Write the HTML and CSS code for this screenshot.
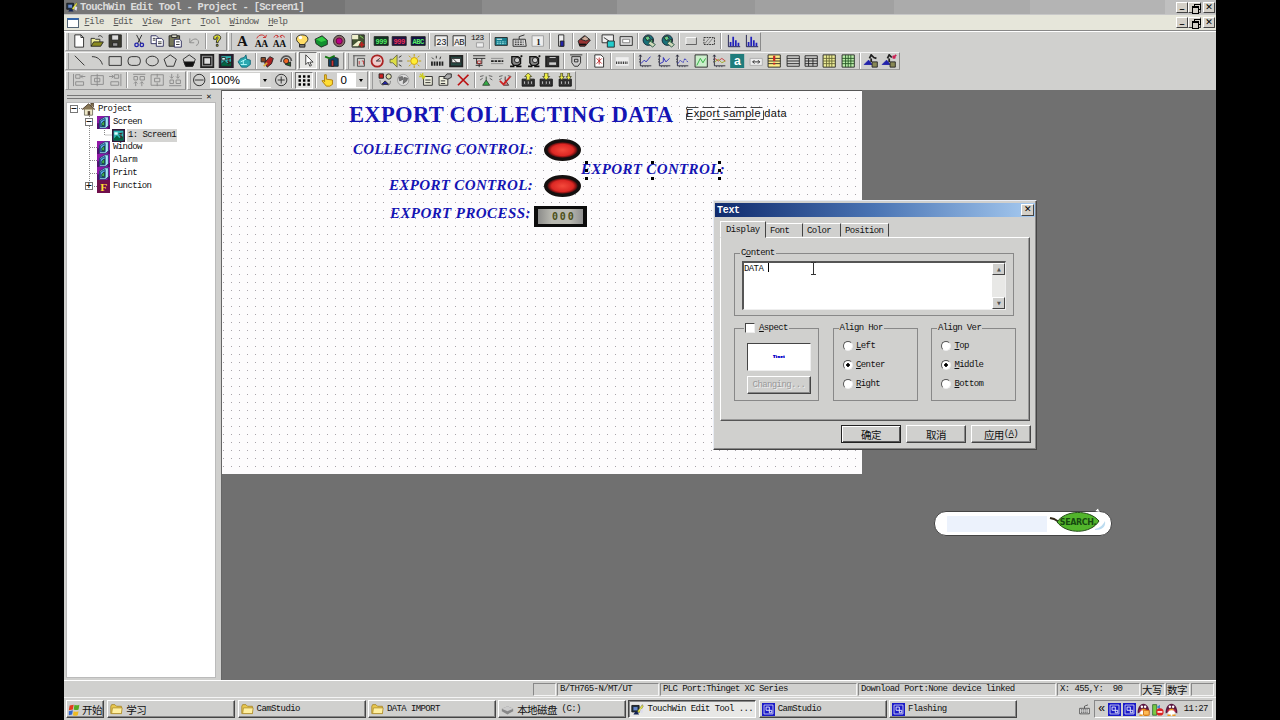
FILE: index.html
```
<!DOCTYPE html>
<html lang="en">
<head>
  <meta charset="UTF-8">
  <title>TouchWin Edit Tool - Project - [Screen1]</title>
  <link rel="stylesheet" href="styles.css">
</head>
<body>
<svg class="defs">
  <symbol id="book" viewBox="0 0 16 16"><rect width="16" height="16" fill="#9018a8"/><path d="M0 9h3v7H0zM13 11h3v5h-3z" fill="#501070"/><path d="M3 5l7-4h4v11l-3 3H3z" fill="#a8e8f4" stroke="#1a2a68" /><path d="M4 6l6-3v10H4z" fill="#58a8e0" stroke="#036"/><path d="M6 9l3-3v6H6z" fill="#4c5" stroke="#122"/></symbol>
  <symbol id="scene" viewBox="0 0 16 16"><rect width="16" height="16" fill="#301838"/><rect x="2" y="2" width="12" height="12" fill="#2cb4b4"/><path d="M2 14v-2l4-4 3 3 5-2v5z" fill="#064"/><path d="M3 4h4v3H3z" fill="#dff"/><path d="M11 5v7M8 6l5-1M9 8l4 2" stroke="#411"/></symbol>
  <symbol id="folder" viewBox="0 0 16 16"><path d="M1 13V4l1-2h4l2 2h6v9z" fill="#e8c850" stroke="#a58220"/><path d="M2 13l1-7h12l-1 7z" fill="#fff0a0" stroke="#b09030"/></symbol>
  <symbol id="app" viewBox="0 0 16 16"><path d="M1 3h9v8H1z" fill="#234" stroke="#111"/><path d="M3 5h5v4H3z" fill="#68c"/><path d="M3 14h7l-2-3H5z" fill="#125" /><path d="M8 10l6-8 1 2-5 8z" fill="#ee4" stroke="#553" stroke-width=".6"/><path d="M12 7l3 1-1 5-3-2" fill="#dde"/></symbol>
  <symbol id="cam" viewBox="0 0 16 16"><rect width="16" height="16" fill="#1a1ac8"/><path d="M2.500 2.500h11v11h-11z" stroke="#dde" fill="none"/><path d="M5 5h4v4H5zM9 9h3v3H9z" stroke="#fff" fill="none"/></symbol>
  <symbol id="penguin" viewBox="0 0 16 16"><path d="M1 13C0 8 3 1 8 1s8 7 7 12l-3-2H4z" fill="#5a1840"/><path d="M3 8h10v3H3z" fill="#d03048"/><ellipse cx="8" cy="12" rx="4" ry="3.500" fill="#fff"/><circle cx="6" cy="4.500" r="1.500" fill="#fff"/><circle cx="10" cy="4.500" r="1.500" fill="#fff"/><path d="M5 7h6l-1 2H6z" fill="#e92"/><path d="M3 15h4M9 15h4" stroke="#e92" stroke-width="2"/></symbol>
  <symbol id="globe" viewBox="0 0 16 16"><circle cx="7" cy="7" r="6" fill="#187078" stroke="#123"/><path d="M3 4l4-2 2 3-3 3zM8 8l4-2v4l-3 2z" fill="#6c8"/><path d="M9 8l6 4-3 3-5-4z" fill="#cfd8b8" stroke="#254"/></symbol>
  <symbol id="axes" viewBox="0 0 16 16"><path d="M2.500 1v12.500H15M1 3l1.500-2L4 3M5 14v1M8 14v1M11 14v1M1 6h1M1 9h1" stroke="#223" fill="none"/></symbol>
  <symbol id="bars" viewBox="0 0 16 16"><path d="M2.500 1v13.500H16" stroke="#114" fill="none"/><path d="M5 14V9M8 14V3M11 14V7M14 14v-4" stroke="#22b" stroke-width="2"/></symbol>
  <symbol id="robot" viewBox="0 0 16 16"><path d="M3 3h7l3 2v6l-3 2H5l-2-3z" fill="#888" stroke="#111" stroke-width="1.500"/><circle cx="9" cy="7" r="3" fill="#ccc" stroke="#111"/><path d="M1 14h5M8 14h6M13 2l2 1" stroke="#111" stroke-width="2"/></symbol>
  <symbol id="download" viewBox="0 0 16 16"><path d="M1 7h14v8H1z" fill="#333" stroke="#111"/><path d="M3 9h2v4H3zM7 9h2v4H7zM11 9h2v4h-2z" fill="#eee"/></symbol>
</svg>

<div class="app">
  <div class="titlebar">
    <svg class="logo"><use href="#app"/></svg>
    <span class="caption">TouchWin Edit Tool - Project - [Screen1]</span>
    <div class="winbtns"><i>_</i><i class="restore"></i><i>✕</i></div>
  </div>
  <div class="menubar">
    <span class="docicon"></span>
    <span><u>F</u>ile</span><span><u>E</u>dit</span><span><u>V</u>iew</span><span><u>P</u>art</span><span><u>T</u>ool</span><span><u>W</u>indow</span><span><u>H</u>elp</span>
    <div class="winbtns"><i>_</i><i class="restore"></i><i>✕</i></div>
  </div>

  <div class="toolbars">
    <div class="row">
      <div class="bar">
        <svg viewBox="0 0 16 16"><path d="M3 1h7l3 3v11H3z" fill="#fff"/><path d="M10 1v3h3"/></svg>
        <svg viewBox="0 0 16 16"><path d="M1 14V5h4l1 1h5v3" fill="#ee9"/><path d="M1 14l3-5h11l-3 5z" fill="#8a8a20"/><path d="M9 3c2-2 4-1 5 1"/></svg>
        <svg viewBox="0 0 16 16"><path d="M1 1h14v14H1z" fill="#3a3a30"/><path d="M4 1h8v6H4z" fill="#ddd"/><path d="M5 10h6v4H5z" fill="#999"/></svg>
        <b></b>
        <svg viewBox="0 0 16 16"><path d="M5 1l5 10M11 1L6 11"/><g stroke="#22a" stroke-width="1.500"><circle cx="5" cy="12.500" r="2"/><circle cx="11" cy="12.500" r="2"/></g></svg>
        <svg viewBox="0 0 16 16"><g fill="#fff" stroke="#225"><path d="M1 2h6l2 2v7H1z"/><path d="M7 5h6l2 2v7H7z"/></g><path d="M3 5h3M3 7h3M9 9h4M9 11h4"/></svg>
        <svg viewBox="0 0 16 16"><path d="M1 2h12v12H1z" fill="#77775a"/><path d="M4 1h6v3H4z" fill="#ddc"/><path d="M7 6h6l2 2v7H7z" fill="#fff" stroke="#225"/><path d="M9 9h4M9 12h4"/></svg>
        <svg viewBox="0 0 16 16"><path d="M3 5v5h5M3 10c3-5 9-6 10-1 0 2-1 4-3 4" stroke="#888"/></svg>
        <b></b>
        <svg viewBox="0 0 16 16"><path d="M4 6V4c0-4 8-4 8 0 0 3-3 3-3 6H7c0-4 2-4 2-6-1-1-2-1-2 2z" fill="#dd3"/><path d="M7 12h2v2H7z" fill="#dd3"/></svg>
      </div>
      <div class="bar">
        <svg viewBox="0 0 16 16"><text x="8" y="14" class="serif" font-size="17">A</text></svg>
        <svg viewBox="0 0 16 16"><text x="8" y="15" class="serif" font-size="11">AA</text><path d="M3 5c2-5 8-5 10-1l1-3M13 4h-3" stroke="#c22"/></svg>
        <svg viewBox="0 0 16 16"><text x="8" y="15" class="serif" font-size="11">AA</text><path d="M2 4c1-3 3-3 5-1M14 4c-1-3-3-3-5-1M5 1l2 2-2 1M11 1L9 3l2 1" stroke="#c22"/></svg>
        <b></b>
        <svg viewBox="0 0 16 16"><path d="M5 11C-1 7 1 1 8 1s9 6 3 10v3H5z" fill="#fd6"/><path d="M5 12h6v3H5z" fill="#777"/><circle cx="6" cy="4" r="2" fill="#fff" stroke="none"/></svg>
        <svg viewBox="0 0 16 16"><path d="M1 6l8-4 6 5v5l-7 3-6-4z" fill="#129030"/><path d="M2 6l7-3 5 4-6 2z" fill="#3c4" stroke="none"/></svg>
        <svg viewBox="0 0 16 16"><circle cx="8" cy="8" r="6.500" fill="#866"/><circle cx="8" cy="8" r="3.500" fill="#b08" stroke="#603"/></svg>
        <svg viewBox="0 0 16 16"><path d="M1 1h14v14H1z" fill="#453" /><path d="M1 1h7v5H1zM8 8h3l-3 6H1z" fill="#eec" stroke="none"/><path d="M12 9v6M9 12h6" stroke="#b22" stroke-width="2"/><path d="M10 2l4 3" stroke="#8d6"/></svg>
        <b></b>
        <svg viewBox="0 0 16 16"><path d="M0 3h16v10H0z" fill="#132"/><text x="8" y="11" font-size="8" class="led">999</text></svg>
        <svg viewBox="0 0 16 16"><path d="M0 3h16v10H0z" fill="#214"/><text x="8" y="11" font-size="8" class="led red">999</text></svg>
        <svg viewBox="0 0 16 16"><path d="M0 3h16v10H0z" fill="#114"/><text x="8" y="11" font-size="8" class="led">ABC</text></svg>
        <b></b>
        <svg viewBox="0 0 16 16"><path d="M1 14V2h14v12" fill="#eee"/><text x="8" y="12" font-size="10">23</text></svg>
        <svg viewBox="0 0 16 16"><path d="M1 14V2h14v12" fill="#eee"/><text x="8" y="12" font-size="10">AB</text></svg>
        <svg viewBox="0 0 16 16"><text x="7" y="7" font-size="9">123</text><path d="M6 10h8v5H6z" fill="#eee" stroke="#999"/></svg>
        <b></b>
        <svg viewBox="0 0 16 16"><path d="M1 4h14v9H1z" fill="#188090"/><path d="M3 6h6" stroke="#fff"/><path d="M3 9h10M3 11h10" stroke="#aee" stroke-dasharray="2 1"/></svg>
        <svg viewBox="0 0 16 16"><path d="M1 6h14l1 8H1zM8 6V3l6-2" fill="#ddd"/><path d="M3 8h10M3 10h10M3 12h10" stroke-dasharray="2 1"/></svg>
        <svg viewBox="0 0 16 16"><path d="M1 2h13v12H1z" fill="#eee" stroke="#999"/><text x="8" y="12" font-size="10" class="serif">1</text></svg>
        <b></b>
        <svg viewBox="0 0 16 16"><path d="M5 1h6v13H5z" fill="#eee"/><path d="M7 8h4v6H7z" fill="#22a"/></svg>
        <b></b>
        <svg viewBox="0 0 16 16"><path d="M1 8l7-6 7 5-6 7H3z" fill="#933"/><path d="M4 6l5-4 5 4-4 2z" fill="#ca9"/><path d="M2 12h8" stroke="#111" stroke-width="2"/></svg>
        <b></b>
        <svg viewBox="0 0 16 16"><path d="M1 1h13v9H1z" fill="#eee"/><path d="M7 8h8v7H7z" fill="#2cc"/><path d="M3 4l6 4"/></svg>
        <svg viewBox="0 0 16 16"><path d="M1 3h14v10H1z" fill="#ddd"/><path d="M4 6h8v4H4z" fill="#fff" stroke="#777"/></svg>
        <b></b>
        <svg><use href="#globe"/></svg>
        <svg><use href="#globe"/></svg>
        <b></b>
        <svg viewBox="0 0 16 16"><path d="M2 12V4h12" stroke="#fff"/><path d="M2 12h12V4" stroke="#555"/></svg>
        <svg viewBox="0 0 16 16"><path d="M2 4h12v8H2z" stroke-dasharray="2 1"/><path d="M3 11l5-6M7 11l5-6" stroke="#777"/></svg>
        <b></b>
        <svg><use href="#bars"/></svg>
        <svg><use href="#bars"/></svg>
      </div>
    </div>
    <div class="row">
      <div class="bar">
        <svg viewBox="0 0 16 16"><path d="M3 2l11 11"/></svg>
        <svg viewBox="0 0 16 16"><path d="M2 3c6 0 10 3 12 9"/></svg>
        <svg viewBox="0 0 16 16"><path d="M1 3h14v10H1z"/></svg>
        <svg viewBox="0 0 16 16"><rect x="1" y="3" width="14" height="10" rx="4"/></svg>
        <svg viewBox="0 0 16 16"><ellipse cx="8" cy="8" rx="7" ry="5.500"/></svg>
        <svg viewBox="0 0 16 16"><path d="M8 1l7 5-3 8H4L1 6z"/></svg>
        <svg viewBox="0 0 16 16"><path d="M8 1l7 5-3 8H4L1 6z"/><path d="M2 9h12l-2 5H4z" fill="#111"/></svg>
        <svg viewBox="0 0 16 16"><path d="M1 1h14v14H1z" stroke-width="2" fill="#999"/><path d="M4 4h8v8H4z" fill="#ddd" stroke-width="1.500"/></svg>
        <svg><use href="#scene"/></svg>
        <svg viewBox="0 0 16 16"><path d="M1 9l3-4 4-1 2-3 1 5 4 1v5l-4 3H5z" fill="#2aa8b0" stroke="#167"/><path d="M4 9l6-3M4 12h7M7 7v5" stroke="#bff"/></svg>
        <b></b>
        <svg viewBox="0 0 16 16"><path d="M1 4h5v5H1z" fill="#842"/><path d="M5 10l6-7 4 2-2 6-5 4z" fill="#a22"/><path d="M4 14l4-4" stroke="#da3" stroke-width="2"/></svg>
        <svg viewBox="0 0 16 16"><path d="M2 9C2 1 13 0 14 8" stroke="#555" stroke-width="2"/><circle cx="8" cy="8" r="3" fill="#e62"/><path d="M7 12l6-3v5z" fill="#262"/></svg>
      </div>
      <div class="bar pick">
        <svg class="pressed" viewBox="0 0 16 16"><path d="M5 1v12l3-3 2 5 2-1-2-4h4z" fill="#fff"/></svg>
        <b></b>
        <svg viewBox="0 0 16 16"><path d="M5 6l5-3 6 2v9H5z" fill="#146"/><path d="M1 3l5 2 6-3" stroke="#171" stroke-width="2"/><path d="M8 7h3v7H8z" fill="#c33"/></svg>
      </div>
      <div class="bar tight">
        <svg viewBox="0 0 16 16"><path d="M1 2h14M2 2v12M6 5h8v9H6z" stroke="#444"/><path d="M8 8v4M11 8h2v4" stroke="#b33"/></svg>
        <svg viewBox="0 0 16 16"><circle cx="8" cy="8" r="6.500" stroke="#a22" stroke-width="2" fill="#ecc"/><path d="M11 5L7 8h5"/></svg>
        <svg viewBox="0 0 16 16"><path d="M1 6h3l5-5v14l-5-5H1z" fill="#dd4" stroke="#664"/><path d="M11 4l3-2M11 8h4M11 12l3 2"/></svg>
        <svg viewBox="0 0 16 16"><circle cx="8" cy="8" r="4" fill="#fe3" stroke="#c90"/><path d="M8 0v3M8 13v3M0 8h3M13 8h3M2 2l2 2M14 2l-2 2M2 14l2-2M14 14l-2-2" stroke="#b90"/></svg>
        <b></b>
        <svg viewBox="0 0 16 16"><path d="M1 11h15" stroke-width="5" stroke-dasharray="2 1"/><path d="M2 4l2 2M7 2v3M12 3l-1 3"/></svg>
        <svg viewBox="0 0 16 16"><path d="M1 2h14v12H1z" fill="#274a44" stroke-width="2"/><path d="M3 5h10v5H3z" fill="#eee"/><path d="M5 6l4 4"/></svg>
        <b></b>
        <svg viewBox="0 0 16 16"><path d="M1 2h14M1 5h14M5 5v6h6V5M8 11v4M4 13h8"/><path d="M6 8h4v3H6z" stroke="#a33"/></svg>
        <svg viewBox="0 0 16 16"><path d="M1 5h14M1 11h14" stroke="#888"/><path d="M1 8h14" stroke-width="2" stroke-dasharray="3 1"/></svg>
        <svg><use href="#robot"/></svg>
        <svg><use href="#robot"/></svg>
        <svg viewBox="0 0 16 16"><path d="M1 3h14v11H1z" fill="#333" stroke-width="2"/><path d="M4 9h9v4H4z" fill="#ccc"/><path d="M5 4h7" stroke="#ddd"/></svg>
        <b></b>
        <svg viewBox="0 0 16 16"><path d="M1 1h14M3 3h10v7l-3 4H6l-3-4z" fill="#ccc"/><path d="M6 6h4v3H6z"/></svg>
        <b></b>
        <svg viewBox="0 0 16 16"><path d="M3 1h7l3 3v11H3z" fill="#fff"/><path d="M5 5l6 6M5 11l6-6M8 4v8" stroke="#b22"/></svg>
        <b></b>
        <svg viewBox="0 0 16 16"><path d="M0 3h16v11H0z" fill="#eee" stroke="#ccc"/><path d="M1 10h14" stroke-width="3" stroke-dasharray="1 1"/></svg>
        <b></b>
        <svg viewBox="0 0 16 16"><use href="#axes"/><path d="M3 11l4-4 2 2 5-6" stroke="#22b"/></svg>
        <svg viewBox="0 0 16 16"><use href="#axes"/><path d="M3 11l4-2V4l3 5 4-4" stroke="#22b"/></svg>
        <svg viewBox="0 0 16 16"><use href="#axes"/><path d="M3 11l3-4 3 3 2-5 4 5" stroke="#22b" stroke-dasharray="2 1"/></svg>
        <svg viewBox="0 0 16 16"><path d="M1 1h14v14H1z" fill="#cec"/><path d="M3 13l4-8 3 5 3-5" stroke="#2a3"/></svg>
        <svg viewBox="0 0 16 16"><use href="#axes"/><path d="M3 5l4 3 4-3 4 3" stroke="#c33"/><path d="M3 9l4-3 4 4 4-2" stroke="#9a2"/></svg>
        <svg viewBox="0 0 16 16"><path d="M0 0h16v16H0z" fill="#207c7c" stroke="none"/><text x="8" y="12" font-size="14" class="white">a</text></svg>
        <svg viewBox="0 0 16 16"><path d="M1 5h14v8H1z" fill="#eee" stroke="#aaa"/><path d="M4 9h8M6 7L4 9l2 2M10 7l2 2-2 2"/></svg>
        <svg viewBox="0 0 16 16"><path d="M1 1h14v14H1z" fill="#fe8"/><path d="M1 5h14M1 8h14M1 11h14"/><path d="M8 2v6M8 10v2" stroke="#c22" stroke-width="2.500"/></svg>
        <svg viewBox="0 0 16 16"><path d="M1 2h14v12H1zM1 5h14M1 8h14M1 11h14"/></svg>
        <svg viewBox="0 0 16 16"><path d="M1 2h14v12H1zM1 5h14M1 8h14M1 11h14M5 5v9M10 5v9"/></svg>
        <svg viewBox="0 0 16 16"><path d="M1 1h14v14H1z" fill="#ee9"/><path d="M1 5h14M1 8h14M1 11h14M5 1v14M8 1v14M11 1v14" stroke="#663"/></svg>
        <svg viewBox="0 0 16 16"><path d="M1 1h14v14H1z" fill="#bea"/><path d="M1 5h14M1 8h14M1 11h14M5 1v14M8 1v14M11 1v14" stroke="#252"/></svg>
        <b></b>
        <svg viewBox="0 0 16 16"><path d="M0 12l5-5 4 5z" fill="#22a" stroke="#22a"/><path d="M6 5l2-4 3 3 3 1M8 5v4" stroke-width="2"/><path d="M9 9h6v6H9z" fill="#885"/></svg>
        <svg viewBox="0 0 16 16"><path d="M0 12l5-5 4 5z" fill="#22a" stroke="#22a"/><path d="M6 5l2-4 3 3M8 5v4" stroke-width="2"/><path d="M9 9h6v6H9z" fill="#885"/><path d="M12 5l4-4M12 2l3 3" stroke="#c25" stroke-width="2"/></svg>
      </div>
    </div>
    <div class="row last">
      <div class="bar dim">
        <svg viewBox="0 0 16 16"><path d="M1.500 1v14M4 2h5v4H4zM4 10h9v4H4zM15 4h-5M12 2l-2 2 2 2"/></svg>
        <svg viewBox="0 0 16 16"><path d="M1 3h14v10H1zM8 1v14M5 6h6v4H5z"/></svg>
        <svg viewBox="0 0 16 16"><path d="M14.500 1v14M7 2h5v4H7zM3 10h9v4H3zM1 4h5M4 2l2 2-2 2"/></svg>
        <b></b>
        <svg viewBox="0 0 16 16"><path d="M1 1.500h14M2 4h4v4H2zM9 4h5v4H9zM4 15v-5M11 15v-5M2 12l2-2 2 2M9 12l2-2 2 2"/></svg>
        <svg viewBox="0 0 16 16"><path d="M1 2h14v12H1zM5 6h6v4H5zM8 1v4M8 11v4"/></svg>
        <svg viewBox="0 0 16 16"><path d="M1 14.500h14M2 8h4v4H2zM9 8h5v4H9zM4 1v5M11 1v5M2 4l2 2 2-2M9 4l2 2 2-2"/></svg>
      </div>
      <div class="bar edit">
        <svg viewBox="0 0 16 16"><circle cx="8" cy="8" r="6.500"/><path d="M3 8h10"/></svg>
        <div class="combo zoom"><span>100%</span><i></i></div>
        <svg viewBox="0 0 16 16"><circle cx="8" cy="8" r="6.500"/><path d="M4 8h8M8 4v8"/></svg>
        <b></b>
        <svg class="pressed" viewBox="0 0 16 16"><path d="M1 3h14M1 8h14M1 13h14" stroke="#000" stroke-width="3" stroke-dasharray="3 2.500"/></svg>
        <b></b>
        <svg viewBox="0 0 16 16"><path d="M5 10V2h2v5l7 1v5l-3 2H7L2 9l1-1z" fill="#fd3" stroke="#a70"/></svg>
        <div class="combo state"><span>0</span><i></i></div>
      </div>
      <div class="bar device">
        <svg viewBox="0 0 16 16"><path d="M1 1h5v5H1z" fill="#c22"/><circle cx="12" cy="4" r="3" fill="#dda"/><path d="M4 13l4-4 4 4z" fill="#22a"/><path d="M2 8c0 4 2 6 4 6M14 9c0 3-1 5-3 5" stroke="#777"/></svg>
        <svg viewBox="0 0 16 16"><circle cx="8" cy="8" r="6.500" fill="#ddd" stroke="#999"/><path d="M3 5l4-1 1 3-4 2zM9 5l4 1-1 3-4 3z" fill="#777" stroke="#666"/></svg>
        <b></b>
        <svg viewBox="0 0 16 16"><path d="M5 4h10v10H5z" fill="#eed"/><path d="M7 8h6M7 11h6"/><path d="M0 4h7M4 0v7M1 1l5 5" stroke="#cc2" stroke-width="1.500"/></svg>
        <svg viewBox="0 0 16 16"><path d="M1 4h10v10H1z" fill="#eed"/><path d="M3 9h5M3 12h5"/><path d="M6 6l4-5h5v4l-4 2z" fill="#aaa"/></svg>
        <svg viewBox="0 0 16 16"><path d="M2 2l12 12M14 2L2 14" stroke="#b11" stroke-width="2"/></svg>
        <b></b>
        <svg viewBox="0 0 16 16"><path d="M1 4l4-1M15 4l-4-1M1 8l3-2M15 8l-3-2" stroke="#555"/><path d="M8 4v4l4 6H4l4-6" fill="#3a4" stroke="#343"/></svg>
        <svg viewBox="0 0 16 16"><path d="M1 4l4-1M15 4l-4-1M1 8l3-2" stroke="#555"/><path d="M8 4v4l4 6H6" fill="#c88" stroke="#433"/><path d="M2 9l4 4 8-9" stroke="#c22" stroke-width="2"/></svg>
        <b></b>
        <svg viewBox="0 0 16 16"><use href="#download"/><path d="M8 0l4 4h-2v4H6V4H4z" fill="#ee4" stroke="#553"/></svg>
        <svg viewBox="0 0 16 16"><use href="#download"/><path d="M8 8l4-4h-2V0H6v4H4z" fill="#ee4" stroke="#553"/></svg>
        <svg viewBox="0 0 16 16"><use href="#download"/><path d="M4 8l3-4H5V0H3v4H1zM12 8l3-4h-2V0h-2v4H9z" fill="#ee4" stroke="#553"/></svg>
      </div>
    </div>
  </div>

  <div class="main">
    <div class="sidebar">
      <div class="grip"><span></span><em>✕</em></div>
      <div class="tree">
        <svg class="lines" width="60" height="100"><path d="M10 5.500h10M24.500 11v72M25 44.500h8M25 57.500h8M25 70.500h8M25 83.500h8M39.500 25v7h9" /></svg>
        <div class="node"><i class="box">−</i><svg viewBox="0 0 16 16"><path d="M3 7v8h10V7" fill="#eee8c8" stroke="#665"/><path d="M0 8l8-7 8 7M11 3V0h3v5" fill="#875" stroke="#432"/><path d="M7 10h3v5H7z" fill="#543"/></svg>Project</div>
        <div class="node l1"><i class="box">−</i><svg><use href="#book"/></svg>Screen</div>
        <div class="node l2"><svg><use href="#scene"/></svg><span class="sel">1: Screen1</span></div>
        <div class="node l1 leaf"><svg><use href="#book"/></svg>Window</div>
        <div class="node l1 leaf"><svg><use href="#book"/></svg>Alarm</div>
        <div class="node l1 leaf"><svg><use href="#book"/></svg>Print</div>
        <div class="node l1"><i class="box">+</i><svg viewBox="0 0 16 16"><path d="M0 0h16v16H0z" fill="#70104c"/><text x="8" y="13" text-anchor="middle" font-size="14" class="fn">F</text></svg>Function</div>
      </div>
    </div>
    <div class="workspace">
      <div class="canvas">
        <div class="text heading">EXPORT COLLECTING DATA</div>
        <div class="text sample">Export sample data</div>
        <svg class="outline" width="79" height="14"><path d="M.5 .5h77v12H.5z" fill="none" stroke="#444" stroke-dasharray="12 4"/></svg>
        <div class="text label collect">COLLECTING CONTROL:</div>
        <div class="text label export">EXPORT CONTROL:</div>
        <div class="text label process">EXPORT PROCESS:</div>
        <div class="text label moving">EXPORT CONTROL:</div>
        <svg class="handles" width="140" height="20"><path d="M1 2.500h3M67 2.500h3M134 2.500h3M1 10.500h3M134 10.500h3M1 18.500h3M67 18.500h3M134 18.500h3" stroke="#000" stroke-width="3"/></svg>
        <div class="lamp"></div>
        <div class="lamp second"></div>
        <div class="counter">000</div>
      </div>
    </div>
  </div>

  <div class="statusbar">
    <span class="p1"></span><span class="p2">B/TH765-N/MT/UT</span><span class="p3">PLC Port:Thinget XC Series</span><span class="p4">Download Port:None device linked</span><span class="p5">X: 455,Y:&nbsp; 90</span><span class="p6 cjk">大写</span><span class="p6 cjk">数字</span><span class="p7"></span>
  </div>

  <div class="taskbar">
    <div class="start cjk"><svg viewBox="0 0 16 16"><path d="M2 3l5-1-1 6-5 1z" fill="#e33c1c"/><path d="M8 2c2 1 4 1 6 0l-1 6c-2 1-4 1-6 0z" fill="#5a2"/><path d="M1 10l5-1-1 5-4 1z" fill="#36c"/><path d="M7 10c2 1 4 1 6 0l-1 5c-2 1-4 1-6 0z" fill="#eb2"/></svg>开始</div>
    <div class="task cjk"><svg><use href="#folder"/></svg>学习</div>
    <div class="task"><svg><use href="#folder"/></svg>CamStudio</div>
    <div class="task"><svg><use href="#folder"/></svg>DATA IMPORT</div>
    <div class="task cjk"><svg viewBox="0 0 16 16"><path d="M1 7l7-3 7 3v3l-7 4-7-4z" fill="#888"/><path d="M1 7l7-3 7 3-7 3z" fill="#ccc"/></svg>本地磁盘<span class="mono">&nbsp;(C:)</span></div>
    <div class="task active"><svg><use href="#app"/></svg>TouchWin Edit Tool ...</div>
    <div class="task"><svg><use href="#cam"/></svg>CamStudio</div>
    <div class="task"><svg><use href="#cam"/></svg>Flashing</div>
    <svg class="kbd" viewBox="0 0 16 16"><path d="M1 7h14v8H1zM8 7V4l5-2" fill="#eee" stroke="#222"/><path d="M3 9h10M3 11h10M3 13h10" stroke="#222" stroke-dasharray="2 1"/></svg>
    <div class="tray"><span>«</span>
      <svg><use href="#cam"/></svg><svg><use href="#cam"/></svg>
      <svg viewBox="0 0 16 16"><use href="#penguin"/><path d="M8 9h7v6H8z" fill="#fb5" stroke="#c60"/></svg>
      <svg viewBox="0 0 16 16"><path d="M2 2h5v13H2z" fill="#7c4" stroke="#363"/><path d="M7 5l4-3v6" fill="#48c"/><circle cx="11" cy="11" r="4.500" fill="#d22"/><path d="M8 11h6" stroke="#fff" stroke-width="2"/></svg>
      <svg><use href="#penguin"/></svg>
      <time>11:27</time></div>
  </div>

  <div class="search">
    <div class="field"></div>
    <svg width="62" height="27" viewBox="0 0 62 27"><path d="M46 3l3-3 2 4" fill="#fff" stroke="#555" stroke-width=".6"/><path d="M46 21c5-1 8-4 10-8 1 6-3 9-10 9z" fill="#bcdcf0"/><path d="M1 10l4 1 5 3" stroke="#332a1a" stroke-width="2" fill="none"/><path d="M8 14C16 2 40 1 50 13 42 26 18 27 8 14z" fill="#52b52c" stroke="#234a18"/><text x="29" y="16.500" text-anchor="middle">SEARCH.</text></svg>
  </div>

  <div class="dialog">
    <div class="dlg-title">Text<i>✕</i></div>
    <div class="tabs"><span class="on">Display</span><span class="t2">Font</span><span class="t3">Color</span><span class="t4">Position</span></div>
    <div class="page">
      <fieldset class="content">
        <legend>C<u>o</u>ntent</legend>
        <div class="area"><div class="typed">DATA <i></i></div>
          <div class="scroll"><b>▲</b><b>▼</b></div>
        </div>
      </fieldset>
      <div class="groups">
        <fieldset class="aspect">
          <legend><i class="check"></i><u>A</u>spect</legend>
          <div class="preview"><span>Tinet</span></div>
          <div class="btn off">Changing...</div>
        </fieldset>
        <fieldset>
          <legend>Align Hor</legend>
          <label><i></i><u>L</u>eft</label>
          <label><i class="on"></i><u>C</u>enter</label>
          <label><i></i><u>R</u>ight</label>
        </fieldset>
        <fieldset>
          <legend>Align Ver</legend>
          <label><i></i><u>T</u>op</label>
          <label><i class="on"></i><u>M</u>iddle</label>
          <label><i></i><u>B</u>ottom</label>
        </fieldset>
      </div>
    </div>
    <div class="actions"><div class="btn cjk default">确定</div><div class="btn cjk">取消</div><div class="btn cjk">应用<span class="mono">(<u>A</u>)</span></div></div>
    <svg class="ibeam" width="7" height="13"><path d="M1 .5h2l.5.5.5-.5h2M3.500 1v11M1 12.500h5" stroke="#333" fill="none"/></svg>
  </div>
</div>
</body>
</html>
```
FILE: styles.css
```
* {
  box-sizing: border-box;
}

body {
  margin: 0;
  background: #000;
  font: 9px/11px "Liberation Mono", "Noto Sans CJK SC", monospace;
  letter-spacing: -0.6px;
  color: #111;
  overflow: hidden;
}

i, em {
  font-style: normal;
}

.defs {
  position: absolute;
  width: 0;
  height: 0;
}

.cjk {
  font: 10.5px/13px "Noto Sans CJK SC", sans-serif;
  letter-spacing: -0.6px;
}

.mono {
  font: 9px/11px "Liberation Mono", monospace;
  letter-spacing: -0.6px;
}

.app {
  position: relative;
  display: flex;
  flex-direction: column;
  width: 1152px;
  height: 720px;
  margin-left: 64px;
  background: #d0d0ce;
}

/* title + menu */
.titlebar {
  display: flex;
  align-items: center;
  height: 15px;
  padding: 0 1px 0 2px;
  border-bottom: 1px solid #c8c8c8;
  background: linear-gradient(90deg, #767676 281px, #808080 281px 418px, #8c8c8c 418px 553px, #989898 553px 691px, #a1a1a1 691px 830px, #ababab 830px 966px, #b4b4b4 966px 1101px, #c0c0c0 1101px);
}

.logo {
  width: 12px;
  height: 12px;
  margin-right: 2px;
}

.caption {
  font-size: 10.5px;
  font-weight: bold;
  letter-spacing: -0.7px;
  color: #dcdcdc;
  white-space: pre;
}

.menubar {
  display: flex;
  align-items: center;
  height: 16px;
  padding: 0 1px 0 3px;
  background: #e6e6da;
  border-bottom: 1px solid #888;
  color: #555;
}

.menubar > span {
  margin-right: 9.8px;
}

.menubar > .docicon {
  width: 12px;
  height: 10px;
  margin-right: 5.500px;
  border: 1px solid #567;
  border-top: 2px solid #36a;
  background: #fff;
}

.winbtns {
  display: flex;
  margin-left: auto;
}

.winbtns i {
  position: relative;
  width: 12.500px;
  height: 11px;
  background: #d4d0c8;
  border: 1px solid;
  border-color: #fff #444 #444 #fff;
  font: bold 9px/8px "DejaVu Sans", sans-serif;
  text-align: center;
  color: #000;
}

.winbtns i:first-child {
  line-height: 4px;
}

.winbtns i:last-child {
  margin-left: 2px;
}

.restore::before,
.restore::after {
  content: "";
  position: absolute;
  left: 5px;
  top: 1px;
  width: 5px;
  height: 4px;
  border: 1px solid #000;
}

.restore::after {
  left: 3px;
  top: 3px;
  height: 5px;
  border-top-width: 2px;
  background: #d4d0c8;
}

/* toolbars */
.toolbars {
  height: 59px;
  border-top: 1px solid #fff;
}

.row {
  display: flex;
  height: 19.5px;
}

.bar {
  display: flex;
  align-items: center;
  padding-left: 3.500px;
  margin: 0 0 1px 1px;
  border: 1px solid;
  border-color: #f4f4f4 #8a8a8a #9a9a9a #fff;
  box-shadow: inset 2px 0 #d0d0ce, inset 3px 0 #999;
}

.bar + .bar {
  padding-left: 4px;
}

.bar.pick {
  padding: 0 2px 0 1px;
}

.bar + .bar.edit {
  padding-left: 2.500px;
}

.bar + .bar.device {
  padding: 0 1px 0 6px;
}

.bar svg {
  flex: none;
  width: 18.4px;
  height: 14px;
  fill: none;
  stroke: #222;
}

.bar > b {
  width: 2px;
  height: 16px;
  margin: 0 1.450px;
  border-left: 1px solid #999;
  border-right: 1px solid #fff;
}

.bar text {
  fill: #111;
  stroke: none;
  text-anchor: middle;
  font-family: "Liberation Mono", monospace;
  letter-spacing: -0.5px;
}

.bar text.serif {
  font-family: "Liberation Serif", serif;
  font-weight: bold;
}

.bar text.led {
  fill: #5e6;
  font-weight: bold;
}

.bar text.led.red {
  fill: #e35;
}

.bar text.white {
  fill: #fff;
  font-family: "Liberation Sans", sans-serif;
  font-weight: bold;
}

.bar.dim svg {
  stroke: #888;
}

.bar svg.pressed {
  height: 17px;
  padding: 1px 0;
  background: #e6e6e4;
  border: 1px solid;
  border-color: #777 #fff #fff #777;
}

.combo {
  display: flex;
  justify-content: space-between;
  align-items: center;
  height: 15px;
  background: #fff;
  font: 11.500px/15px "Liberation Sans", sans-serif;
  letter-spacing: 0;
  color: #000;
}

.combo.zoom {
  width: 61px;
  margin: 0 1px;
  padding-left: 1px;
}

.combo.state {
  width: 30px;
  padding-left: 4px;
}

.combo i {
  width: 11px;
  height: 14px;
  background: #d4d4d2;
}

.combo i::before {
  content: "";
  display: block;
  margin: 6px 0 0 3px;
  width: 0;
  border: 2.500px solid transparent;
  border-top: 3px solid #000;
}

/* middle area */
.main {
  display: flex;
  height: 590px;
}

.sidebar {
  width: 158px;
  padding: 0 5px 1px 2px;
  border-right: 1px solid #666;
}

.grip {
  display: flex;
  align-items: center;
  height: 13px;
}

.grip span {
  width: 135px;
  height: 4px;
  margin-left: 1px;
  border: 1px solid #777;
  border-width: 1px 0;
}

.grip em {
  margin-left: 4px;
  font: bold 7px/10px "DejaVu Sans", sans-serif;
}

.tree {
  position: relative;
  height: 576px;
  margin-top: -1px;
  background: #fff;
  border: 1px solid #bbb;
}

.lines {
  position: absolute;
  left: -2px;
  top: 0;
}

.lines path {
  fill: none;
  stroke: #888;
  stroke-dasharray: 1 1;
}

.node {
  position: relative;
  display: flex;
  align-items: center;
  height: 12.8px;
  padding-left: 3px;
  white-space: pre;
}

.node svg {
  width: 13px;
  height: 13px;
  margin: 0 3px 0 4px;
}

.node.l1 {
  padding-left: 18px;
}

.node.leaf {
  padding-left: 26px;
}

.node.l2 {
  padding-left: 41px;
}

.node.l2 svg {
  margin-right: 2px;
}

.box {
  width: 8px;
  height: 8px;
  border: 1px solid #777;
  background: #fff;
  font: bold 8px/6px "DejaVu Sans", sans-serif;
  letter-spacing: 0;
  text-indent: -0.5px;
}

.sel {
  padding: 1px;
  background: #d4d4d2;
}

.fn {
  fill: #fd3;
  font: bold 14px "Liberation Serif", serif;
}

.workspace {
  flex: 1;
  background: #707070;
}

.canvas {
  position: relative;
  width: 640px;
  height: 384px;
  border-top: 1px solid #555;
  background: #fdfcfd radial-gradient(circle at 1.500px 1.500px, #a8a4aa 0.4px, transparent 0.9px) 0 6px / 8px 8px;
}

.text {
  position: absolute;
  white-space: pre;
  color: #1414b4;
  font-family: "Liberation Serif", serif;
  font-weight: bold;
}

.heading {
  left: 127px;
  top: 11px;
  font-size: 22.6px;
  line-height: 26px;
  letter-spacing: 0.28px;
}

.label {
  font-size: 15px;
  line-height: 18px;
  font-style: italic;
  letter-spacing: 0.35px;
}

.collect {
  left: 131px;
  top: 49px;
  letter-spacing: 0.28px;
}

.export {
  left: 167px;
  top: 85px;
}

.process {
  left: 168px;
  top: 113px;
  letter-spacing: 0.42px;
}

.moving {
  left: 359px;
  top: 69px;
}

.sample {
  left: 464px;
  top: 16px;
  font: 11px/13px "Liberation Sans", sans-serif;
  letter-spacing: 0.35px;
  color: #111;
}

.outline {
  position: absolute;
  left: 464px;
  top: 16px;
}

.handles {
  position: absolute;
  left: 362px;
  top: 69px;
}

.lamp {
  position: absolute;
  left: 322px;
  top: 48px;
  width: 37px;
  height: 22px;
  border: 3px solid #14100f;
  border-radius: 50%;
  background: radial-gradient(closest-side, #f44a3c, #dc2824 70%, #8c1414 86%, #1c1010);
}

.lamp.second {
  top: 84px;
}

.counter {
  position: absolute;
  left: 312px;
  top: 115px;
  width: 53px;
  height: 21px;
  padding-left: 14px;
  border: solid #0c0c0c;
  border-width: 3px 4px;
  background: linear-gradient(90deg, #8c8c8a, #b8b8b0 30%, #b8b8b0 70%, #909090);
  font: bold 10px/15px "DejaVu Sans Mono", monospace;
  letter-spacing: 1.800px;
  color: #4c5018;
}

/* status + task bars */
.statusbar {
  display: flex;
  align-items: center;
  gap: 1px;
  height: 17px;
  padding-left: 469px;
  border-top: 1px solid #fff;
}

.statusbar span {
  flex: none;
  height: 13px;
  padding-left: 2px;
  line-height: 11px;
  border: 1px solid;
  border-color: #888 #f4f4f4 #f4f4f4 #888;
  white-space: pre;
}

.statusbar .p1 { width: 23px; }
.statusbar .p2 { width: 102px; }
.statusbar .p3 { width: 197px; }
.statusbar .p4 { width: 198px; }
.statusbar .p5 { width: 83px; }
.statusbar .p6 { width: 24px; padding-left: 0; }
.statusbar .p7 { width: 23px; }

.taskbar {
  display: flex;
  align-items: center;
  gap: 2.300px;
  height: 23px;
  padding-left: 2px;
  border-top: 1px solid #f4f4f4;
}

.start,
.task {
  flex: none;
  display: flex;
  align-items: center;
  width: 128px;
  height: 18px;
  padding-left: 2px;
  border: 1px solid;
  border-color: #fff #444 #444 #fff;
  box-shadow: inset -1px -1px #888;
  white-space: pre;
}

.start {
  width: 38px;
  margin-right: 1px;
  padding-left: 1px;
}

.task svg,
.start svg {
  width: 13px;
  height: 13px;
  margin-right: 3px;
}

.start svg {
  margin-right: 1px;
}

.task.active {
  background: #e8e8e6;
  border-color: #444 #fff #fff #444;
  box-shadow: inset 1px 1px #888;
}

.kbd {
  width: 11px;
  height: 12px;
  margin-left: auto;
}

.tray {
  display: flex;
  align-items: center;
  gap: 1.300px;
  width: 119px;
  height: 18px;
  margin: 0 3px 0 2px;
  padding-left: 3px;
  border: 1px solid;
  border-color: #888 #fff #fff #888;
}

.tray span {
  width: 9px;
  font-size: 12px;
}

.tray svg {
  width: 13px;
  height: 13px;
}

.tray time {
  margin-left: 4px;
}

/* floating search box */
.search {
  position: absolute;
  left: 870px;
  top: 511px;
  display: flex;
  align-items: center;
  width: 178px;
  height: 25px;
  padding-left: 12px;
  border: 1px solid #444;
  border-radius: 12px;
  background: #fff;
}

.search .field {
  width: 104px;
  height: 16px;
  margin-right: 2px;
  background: #ecf2fc;
}

.search svg {
  flex: none;
  margin-top: -4px;
}

.search text {
  font: bold 8px "DejaVu Sans", sans-serif;
  letter-spacing: -0.4px;
  fill: #164a10;
}

/* text dialog */
.dialog {
  position: absolute;
  left: 649px;
  top: 200px;
  width: 324px;
  height: 250px;
  padding: 2px 6px 0 6px;
  background: #d0d0ce;
  border: 1px solid;
  border-color: #e8ecf4 #444 #444 #e8ecf4;
  box-shadow: inset -1px -1px #888;
}

.dlg-title {
  display: flex;
  align-items: center;
  justify-content: space-between;
  height: 14px;
  margin: 0 -5px;
  padding: 0 1px 0 2px;
  background: linear-gradient(90deg, #0f2a6c, #4a74b4 50%, #a6caf0);
  color: #fff;
  font-size: 10px;
  font-weight: bold;
  letter-spacing: -0.3px;
}

.dlg-title i {
  width: 13px;
  height: 12px;
  background: #d4d0c8;
  border: 1px solid;
  border-color: #fff #444 #444 #fff;
  color: #000;
  font: bold 9px/9px "DejaVu Sans", sans-serif;
  text-align: center;
}

.tabs {
  display: flex;
  align-items: flex-end;
  height: 20px;
}

.tabs span {
  height: 14px;
  padding: 2px 0 0 3px;
  border: 1px solid;
  border-color: #fff #444 transparent transparent;
}

.tabs .on {
  position: relative;
  width: 46px;
  height: 17px;
  margin-bottom: -1px;
  padding: 3px 0 0 5px;
  border-left-color: #fff;
  background: #d0d0ce;
}

.tabs .t2 { width: 37px; }
.tabs .t3 { width: 38px; }
.tabs .t4 { width: 48px; }

.page {
  height: 184px;
  padding: 10px 13px 0;
  border: 1px solid;
  border-color: #fff #555 #555 #fff;
  box-shadow: inset -1px -1px #999;
}

fieldset {
  margin: 0;
  border: 1px solid #888;
  padding: 0 0 0 7px;
  min-width: 0;
}

legend {
  height: 10px;
  padding: 0 1px;
  line-height: 10px;
  white-space: pre;
}

.content {
  width: 280px;
  height: 68px;
}

.content legend {
  margin-left: -2px;
}

.area {
  display: flex;
  justify-content: space-between;
  width: 264px;
  height: 49px;
  margin-top: 3px;
  background: #fff;
  border: 1px solid;
  border-width: 2px 1px 1px 2px;
  border-color: #555 #eee #eee #555;
}

.typed {
  white-space: pre;
}

.typed i {
  display: inline-block;
  width: 1px;
  height: 9px;
  background: #000;
  vertical-align: -1px;
}

.scroll {
  display: flex;
  flex-direction: column;
  justify-content: space-between;
  width: 13px;
  background: #e8e8e6;
}

.scroll b {
  height: 12px;
  background: #d0d0ce;
  border: 1px solid;
  border-color: #fff #444 #444 #fff;
  font: 5px/10px "DejaVu Sans", sans-serif;
  text-align: center;
  color: #555;
}

.groups {
  display: flex;
  gap: 13.500px;
  margin-top: 7px;
}

.groups fieldset {
  width: 85px;
  height: 78px;
}

.groups legend {
  margin-left: -2px;
}

.groups .aspect {
  padding-left: 12px;
}

.groups .aspect legend {
  display: flex;
  margin-left: -3px;
}

.check {
  width: 10px;
  height: 10px;
  margin-right: 4px;
  background: #fff;
  border: 1px solid;
  border-color: #444 #eee #eee #444;
}

.preview {
  display: flex;
  align-items: center;
  justify-content: center;
  width: 64px;
  height: 28px;
  margin: 10px 0 5px;
  background: #fff;
  border: 1px solid;
  border-color: #444 #eee #eee #444;
}

.preview span {
  font: bold 4px/4px "Liberation Sans", sans-serif;
  letter-spacing: 0.5px;
  color: #0000c8;
  text-shadow: 0 0 #0000c8, 0 0 #0000c8;
}

.groups label {
  display: flex;
  align-items: center;
  height: 11px;
  margin: 7.5px 0 8px 2px;
}

.groups label + label {
  margin-top: 0;
}

.groups label i {
  width: 10px;
  height: 10px;
  margin-right: 3.500px;
  border: 1px solid;
  border-color: #555 #eee #eee #555;
  border-radius: 50%;
  background: #fff;
}

.groups label .on {
  background: radial-gradient(#000 1.500px, #fff 2px);
}

.btn {
  display: flex;
  align-items: center;
  justify-content: center;
  width: 60px;
  height: 18px;
  border: 1px solid;
  border-color: #fff #444 #444 #fff;
  box-shadow: inset -1px -1px #888;
}

.btn.off {
  width: 64px;
  color: #999;
  text-shadow: 1px 1px #eee;
}

.btn.default {
  border-color: #222;
  box-shadow: inset 1px 1px #fff, inset -1px -1px #555;
}

.actions {
  display: flex;
  justify-content: flex-end;
  gap: 5px;
  margin: 4px -1px 0 0;
}

.ibeam {
  position: absolute;
  left: 96px;
  top: 61px;
}
```
